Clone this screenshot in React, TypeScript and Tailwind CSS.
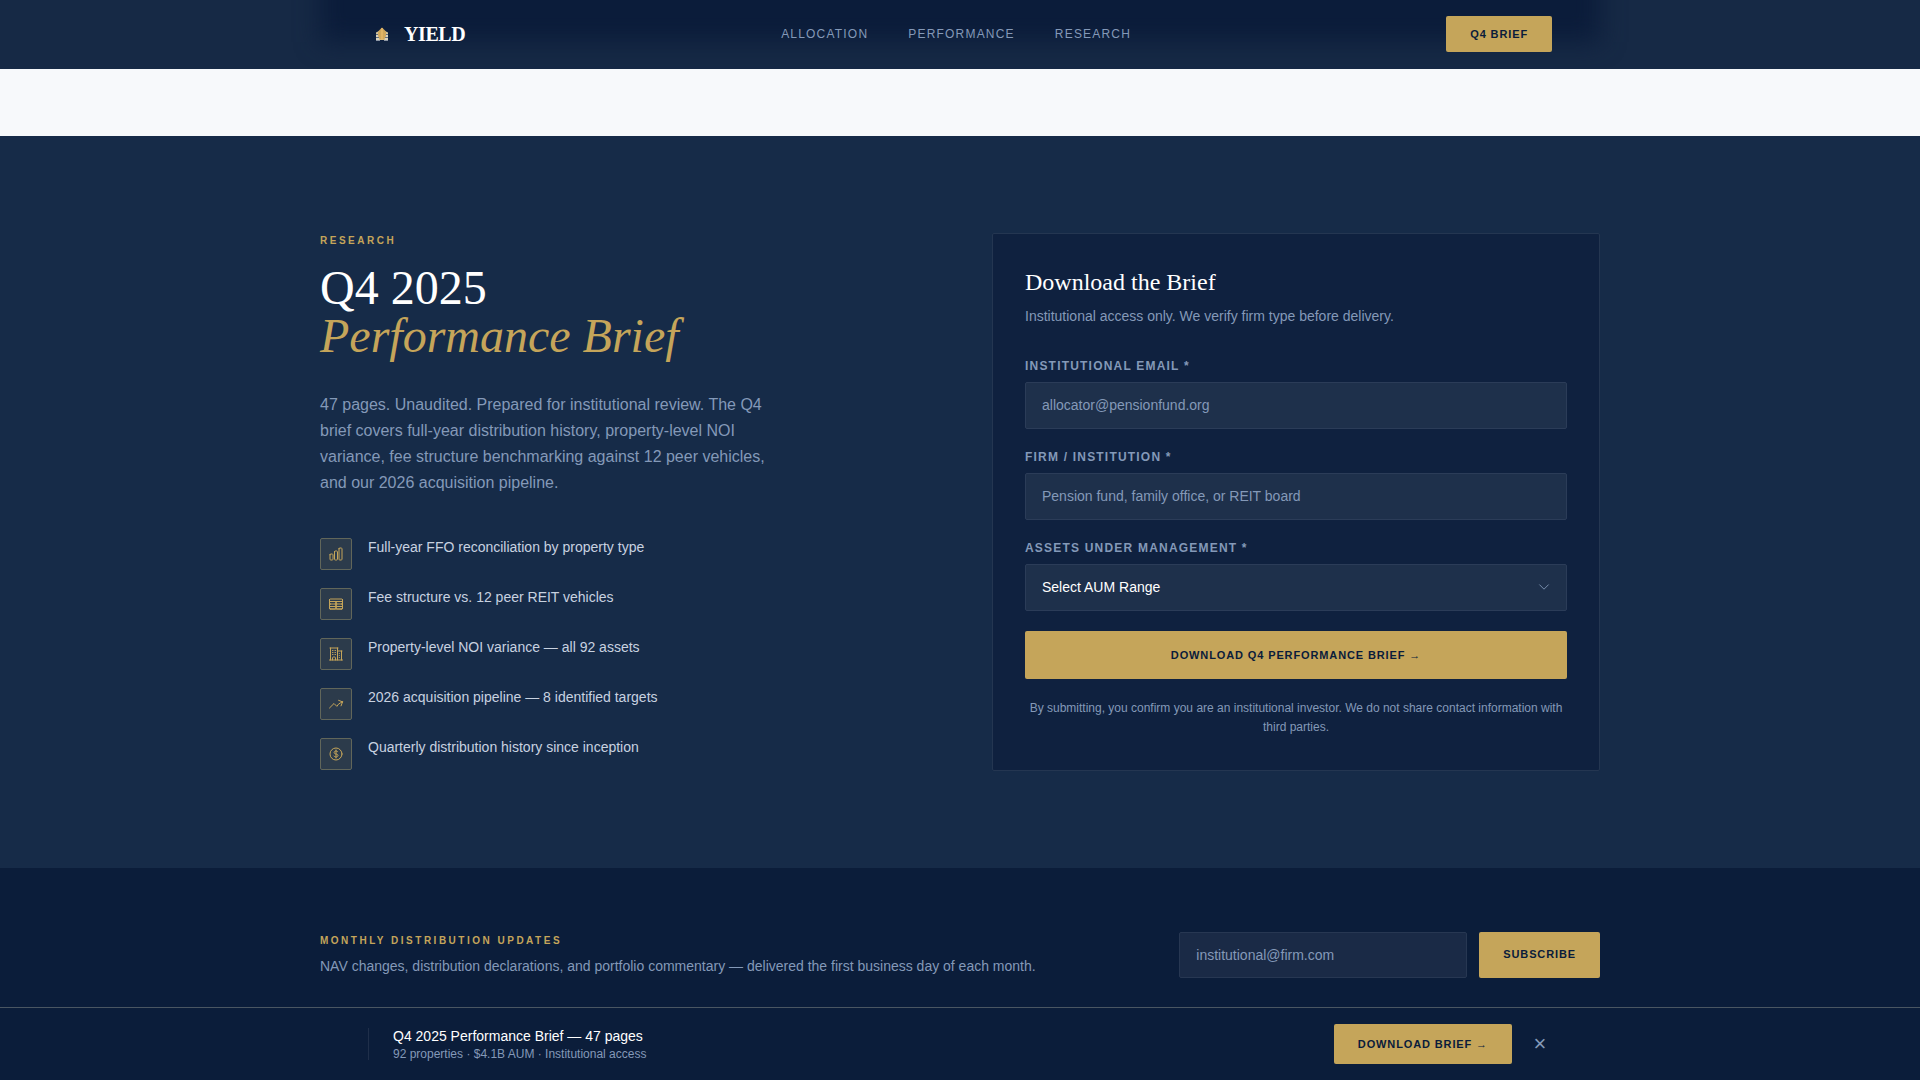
import React, { useState } from 'react';
import {
  HiOutlineArrowTrendingUp,
  HiOutlineBuildingOffice2,
  HiOutlineChartBar,
  HiOutlineChevronDown,
  HiOutlineCurrencyDollar,
  HiOutlineTableCells,
} from 'react-icons/hi2';

const NAV_LINKS = [
  { label: 'Allocation', href: '#allocation' },
  { label: 'Performance', href: '#performance' },
  { label: 'Research', href: '#research' },
];

const HIGHLIGHTS = [
  { icon: HiOutlineChartBar, text: 'Full-year FFO reconciliation by property type' },
  { icon: HiOutlineTableCells, text: 'Fee structure vs. 12 peer REIT vehicles' },
  { icon: HiOutlineBuildingOffice2, text: 'Property-level NOI variance — all 92 assets' },
  { icon: HiOutlineArrowTrendingUp, text: '2026 acquisition pipeline — 8 identified targets' },
  { icon: HiOutlineCurrencyDollar, text: 'Quarterly distribution history since inception' },
];

const AUM_RANGES = ['Under $500M', '$500M – $1B', '$1B – $5B', '$5B – $25B', 'Over $25B'];

const goldButton = 'rounded-xs bg-[#c5a55a] font-bold uppercase text-[11px] leading-4 tracking-[0.08em] text-[#0a1c3a] hover:bg-[#d2b46c]';
const field = 'h-[47px] w-full rounded-xs border border-[#2b3c58] bg-[#1e304b] px-4 pb-0.5 text-sm text-white placeholder:text-[#8499b8] outline-none focus:border-[#c5a55a]';
const fieldLabel = 'mb-[6px] block text-xs leading-5 font-bold uppercase tracking-[0.1em] text-[#8499b8]';

const Logo: React.FC = () => (
  <svg viewBox="0 0 14 14" className="size-[14px]" aria-hidden="true">
    <path d="M1 5.500 4 4h6l3 1.500V13H1z" fill="#d3c49c" />
    <path d="M1 7.500h3M10 7.500h3M1 10.500h3M10 10.500h3" stroke="#5c6a80" strokeWidth="1" />
    <path d="M1 9h3M10 9h3M1 12h3M10 12h3" stroke="#e4e3dd" strokeWidth="1" />
    <path d="M7 .5 11 4.500V9l-2 3.500H5L3 9V4.500z" fill="#d0a75c" />
    <path d="M7 1v12" stroke="#e6b969" strokeWidth="1.500" />
    <path d="M1 13.500h4M9 13.500h4" stroke="#8b95a4" strokeWidth="1" />
  </svg>
);

const Header: React.FC = () => (
  <header className="sticky top-0 z-20 h-[69px] overflow-hidden bg-[#162945]">
    <div className="absolute inset-x-0 -top-10 mx-auto h-[82px] max-w-[1280px] bg-[#0b1c3a] blur-[12px]" />
    <div className="relative mx-auto flex h-[68px] max-w-[1280px] items-center justify-between px-12">
      <a href="#top" className="flex w-[98px] items-center gap-[15px] pl-[7px]">
        <Logo />
        <span className="font-['Liberation_Serif',serif] text-xl leading-7 font-bold tracking-[-0.02em] text-white">YIELD</span>
      </a>
      <nav className="flex gap-10">
        {NAV_LINKS.map(link => (
          <a key={link.label} href={link.href} className="text-xs leading-[18px] tracking-[0.1em] uppercase text-[#8499b8] hover:text-white">
            {link.label}
          </a>
        ))}
      </nav>
      <a href="#brief" className={`${goldButton} px-6 py-[10px]`}>Q4 Brief</a>
    </div>
  </header>
);

const BriefForm: React.FC = () => (
  <form id="brief" onSubmit={e => e.preventDefault()} className="rounded-xs border border-[#243651] bg-[#0f213f] p-8">
    <h3 className="font-['Liberation_Serif',serif] text-2xl leading-8 text-white">Download the Brief</h3>
    <p className="mt-2 text-sm leading-[21px] text-[#8499b8]">Institutional access only. We verify firm type before delivery.</p>
    <div className="mt-[29px] space-y-[18px]">
      <div>
        <label htmlFor="email" className={fieldLabel}>Institutional Email *</label>
        <input id="email" type="email" placeholder="allocator@pensionfund.org" className={field} />
      </div>
      <div>
        <label htmlFor="firm" className={fieldLabel}>Firm / Institution *</label>
        <input id="firm" type="text" placeholder="Pension fund, family office, or REIT board" className={field} />
      </div>
      <div>
        <label htmlFor="aum" className={fieldLabel}>Assets Under Management *</label>
        <div className="relative">
          <select id="aum" defaultValue="" className={`${field} appearance-none`}>
            <option value="">Select AUM Range</option>
            {AUM_RANGES.map(r => <option key={r} value={r}>{r}</option>)}
          </select>
          <HiOutlineChevronDown className="pointer-events-none absolute top-4 right-4 size-[14px] text-[#8499b8]" />
        </div>
      </div>
    </div>
    <button type="submit" className={`${goldButton} mt-5 h-12 w-full`}>Download Q4 Performance Brief →</button>
    <p className="mt-5 pb-px text-center text-xs leading-[19px] text-[#8499b8]">
      By submitting, you confirm you are an institutional investor. We do not share contact information with third parties.
    </p>
  </form>
);

const Research: React.FC = () => (
  <section id="research" className="bg-[#162b48] py-[97px]">
    <div className="mx-auto grid max-w-[1280px] grid-cols-2 gap-16">
      <div>
        <p className="text-[10px] leading-4 font-bold uppercase tracking-[0.25em] text-[#c5a55a]">Research</p>
        <h2 className="mt-[15px] font-['Liberation_Serif',serif] text-5xl leading-12 text-white">
          Q4 2025<br />
          <em className="text-[#c5a55a]">Performance Brief</em>
        </h2>
        <p className="mt-8 max-w-[448px] text-base leading-[26px] text-[#8499b8]">
          47 pages. Unaudited. Prepared for institutional review. The Q4 brief covers full-year distribution history, property-level NOI variance, fee structure benchmarking against 12 peer vehicles, and our 2026 acquisition pipeline.
        </p>
        <ul className="mt-10 space-y-4">
          {HIGHLIGHTS.map(({ icon: Icon, text }) => (
            <li key={text} className="flex gap-4">
              <span className="mt-0.5 flex size-8 items-center justify-center rounded-xs border border-[#61665a] bg-[#2c3b4b]">
                <Icon className="size-4 text-[#c5a55a]" />
              </span>
              <span className="text-sm leading-[22px] text-[#c8d2e0]">{text}</span>
            </li>
          ))}
        </ul>
      </div>
      <BriefForm />
    </div>
  </section>
);

const Newsletter: React.FC = () => (
  <section className="bg-[#0b1d3a] py-16">
    <div className="mx-auto flex max-w-[1280px] items-center justify-between">
      <div>
        <p className="text-[10px] leading-4 font-bold uppercase tracking-[0.25em] text-[#c5a55a]">Monthly Distribution Updates</p>
        <p className="mt-[7px] text-sm leading-[21px] text-[#8499b8]">
          NAV changes, distribution declarations, and portfolio commentary — delivered the first business day of each month.
        </p>
      </div>
      <form onSubmit={e => e.preventDefault()} className="flex gap-3">
        <input
          type="email"
          aria-label="Email address"
          placeholder="institutional@firm.com"
          className="h-[46px] w-72 rounded-xs border border-[#273752] bg-[#1a2a46] px-4 text-sm text-white placeholder:text-[#8499b8] outline-none focus:border-[#c5a55a]"
        />
        <button type="submit" className={`${goldButton} px-6 pb-0.5`}>Subscribe</button>
      </form>
    </div>
  </section>
);

const StickyBar: React.FC<{ onClose: () => void }> = ({ onClose }) => (
  <div className="fixed inset-x-0 bottom-0 z-20 border-t border-[#4a5662] bg-[#0b1d3a] py-4">
    <div className="mx-auto flex max-w-[1280px] items-center justify-between px-12">
      <div className="flex items-center gap-6">
        <span className="h-8 w-px bg-[#1f2f4a]" />
        <div className="pt-0.5">
          <p className="text-sm leading-[18px] text-white">Q4 2025 Performance Brief — 47 pages</p>
          <p className="text-xs leading-[18px] text-[#8499b8]">92 properties · $4.1B AUM · Institutional access</p>
        </div>
      </div>
      <div className="flex items-center gap-4">
        <a href="#brief" className={`${goldButton} px-6 py-3`}>Download Brief →</a>
        <button type="button" aria-label="Dismiss" onClick={onClose} className="w-6 text-center text-[22px] leading-6 text-[#8499b8] hover:text-white">
          ×
        </button>
      </div>
    </div>
  </div>
);

export default function App() {
  const [showBar, setShowBar] = useState(true);

  return (
    <div id="top" className="h-screen overflow-hidden bg-[#f7f9fb] font-['Liberation_Sans',Arial,sans-serif]">
      <Header />
      <main className="pt-[67px]">
        <Research />
        <Newsletter />
      </main>
      {showBar && <StickyBar onClose={() => setShowBar(false)} />}
    </div>
  );
}
